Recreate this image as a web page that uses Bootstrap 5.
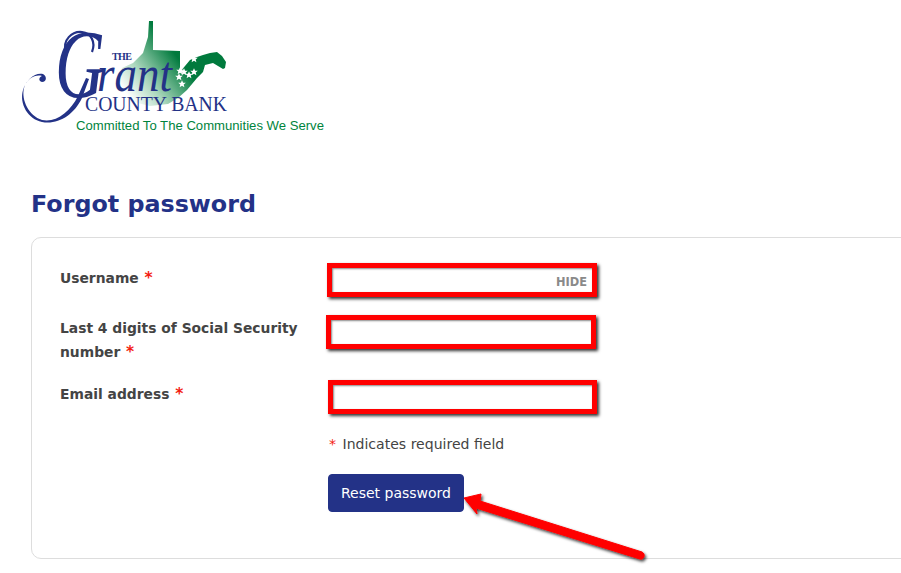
<!DOCTYPE html>
<html lang="en">
<head>
    <meta charset="UTF-8">
    <meta name="viewport" content="width=device-width, initial-scale=1.0">
    <title>Forgot password</title>
    <link rel="stylesheet" href="https://cdn.jsdelivr.net/npm/bootstrap@5.3.0/dist/css/bootstrap.min.css">
    <style>
        html, body { overflow: hidden; }
        body { font-family: "DejaVu Sans", Verdana, sans-serif; color: #444; background: #fff; font-size: 14px; height: 573px; position: relative; }
        .page-wrap { padding: 20px 0 0 31px; }
        .bank-logo { display: block; margin-left: -31px; width: 340px; height: 120px; }
        .page-title { color: #233287; font-size: 23.8px; font-weight: 700; line-height: 30px; margin: 49px 0 18px; }
        .form-box { width: 1000px; height: 322px; border: 1px solid #ddd; border-radius: 10px; padding: 25px 28px 0; }
        .label-col { width: 268px; flex: none; font-weight: 700; line-height: 24px; font-size: 13.85px; padding-top: 3px; }
        .field-row { margin-bottom: 18px; }
        .field-row.second { margin-bottom: 16px; }
        .field-row.second .label-col { padding-top: 1px; }
        .field-row.last .label-col { padding-top: 2px; }
        .req { color: #f31d12; }
        .label-col .req { font-size: 15.5px; line-height: 1; margin-left: 1px; }
        .field { position: relative; width: 270px; height: 34px; margin-left: -1px; }
        .field.second { margin-left: -2px; }
        .field.third { margin-left: 0; width: 269px; }
        .marked-input.form-control { height: 34px; border: 5px solid #f00; border-radius: 0; padding: 0 6px; box-shadow: 2px 2px 3px #333, inset 1px 1px 2px #888; }
        .hide-link { position: absolute; right: 10px; top: 13px; font-size: 11.4px; line-height: 13px; font-weight: 700; color: #8a8a8a; }
        .form-gap { padding-left: 268px; }
        .note-line { line-height: 24px; margin: 18px 0; font-size: 14.05px; }
        .note-line .req { margin-left: 1px; margin-right: 2px; }
        .reset-btn.btn { background: #233287; border-color: #233287; color: #fff; font-size: 14px; height: 38px; width: 136px; padding: 0; border-radius: 4px; }
        .arrow-mark { position: absolute; left: 450px; top: 480px; }
    </style>
</head>
<body>
    <div class="page-wrap">
        <svg class="bank-logo" viewBox="0 20 340 120" width="340" height="120" role="img" aria-label="The Grant County Bank">
            <defs>
                <linearGradient id="stateFill" gradientUnits="userSpaceOnUse" x1="122" y1="88" x2="172" y2="50">
                    <stop offset="0" stop-color="#fff"/>
                    <stop offset="0.4" stop-color="#a9d6bb"/>
                    <stop offset="1" stop-color="#007a3d"/>
                </linearGradient>
                <polygon id="st" points="0,-3.8 1.1,-1.2 3.8,-1.2 1.7,.5 2.4,3.3 0,1.7 -2.4,3.3 -1.7,.5 -3.8,-1.2 -1.1,-1.2"/>
            </defs>
            <path fill="url(#stateFill)" d="M149 21 153 21 153 50 180 51 180 72 185 66 190 60 197 57 203 55 210 53 217 52 222 56 226 62 225 68 223 69 213 63 205 65 203 72 197 78 187 90 178 98 168 104 150 106 125 100 118 85 122 68 133 63 143 53 148 37z"/>
            <g fill="#fff">
                <use href="#st" x="194" y="59"/>
                <use href="#st" x="180" y="71"/>
                <use href="#st" x="184" y="72"/>
                <use href="#st" x="194" y="72"/>
                <use href="#st" x="189" y="75"/>
                <use href="#st" x="179" y="77"/>
                <use href="#st" x="182" y="84"/>
            </g>
            <g fill="#233287">
                <text x="112" y="60" font-family="Liberation Serif" font-size="10" font-weight="700" textLength="20">THE</text>
                <text x="55" y="97" font-family="Liberation Serif" font-style="italic" font-size="98" textLength="50" lengthAdjust="spacingAndGlyphs">G</text>
                <text x="97" y="91" font-family="Liberation Serif" font-style="italic" font-size="50" textLength="75" lengthAdjust="spacingAndGlyphs">rant</text>
                <text x="85" y="110.5" font-family="Liberation Serif" font-size="20" textLength="142" lengthAdjust="spacingAndGlyphs">COUNTY BANK</text>
            </g>
            <path fill="#233287" d="M42 76C36 74 27 78 24 88 21 100 29 116 42 120 56 123 70 112 78 96L86 78 89 79 82 98C74 115 58 125 42 122 28 119 19 104 23 90 26 80 35 72 43 74 47 76 47 82 42 82 38 81 39 77 42 76z"/>
            <path fill="none" stroke="#233287" stroke-width="2.2" d="M66 52C62 40 72 31 82 32 91 33 96 42 92 52"/>
            <text x="76" y="130" fill="#00843d" font-family="Liberation Sans" font-size="12.6" textLength="248" lengthAdjust="spacingAndGlyphs">Committed To The Communities We Serve</text>
        </svg>

        <h1 class="page-title">Forgot password</h1>

        <form class="form-box">
            <div class="d-flex field-row">
                <label class="label-col" for="username">Username <span class="req">*</span></label>
                <div class="field">
                    <input type="text" class="form-control marked-input" id="username">
                    <span class="hide-link">HIDE</span>
                </div>
            </div>
            <div class="d-flex field-row second">
                <label class="label-col" for="ssn">Last 4 digits of Social Security number <span class="req">*</span></label>
                <div class="field second">
                    <input type="text" class="form-control marked-input" id="ssn">
                </div>
            </div>
            <div class="d-flex field-row last mb-0">
                <label class="label-col" for="email">Email address <span class="req">*</span></label>
                <div class="field third">
                    <input type="text" class="form-control marked-input" id="email">
                </div>
            </div>
            <div class="form-gap">
                <p class="note-line"><span class="req">*</span> Indicates required field</p>
                <button type="submit" class="btn reset-btn">Reset password</button>
            </div>
        </form>
    </div>

    <svg class="arrow-mark" width="210" height="93" viewBox="450 480 210 93">
        <defs>
            <filter id="arrowShadow" x="-10%" y="-20%" width="120%" height="140%">
                <feDropShadow dx="1.5" dy="2" stdDeviation="1.5" flood-color="#000" flood-opacity="0.75"/>
            </filter>
        </defs>
        <path fill="#f00" filter="url(#arrowShadow)" stroke="#f00" stroke-width="1" stroke-linejoin="round" d="M464 498 481 494 480 501 642 552C646 554 644 560 640 559L476 508 477 514z"/>
    </svg>
</body>
</html>
